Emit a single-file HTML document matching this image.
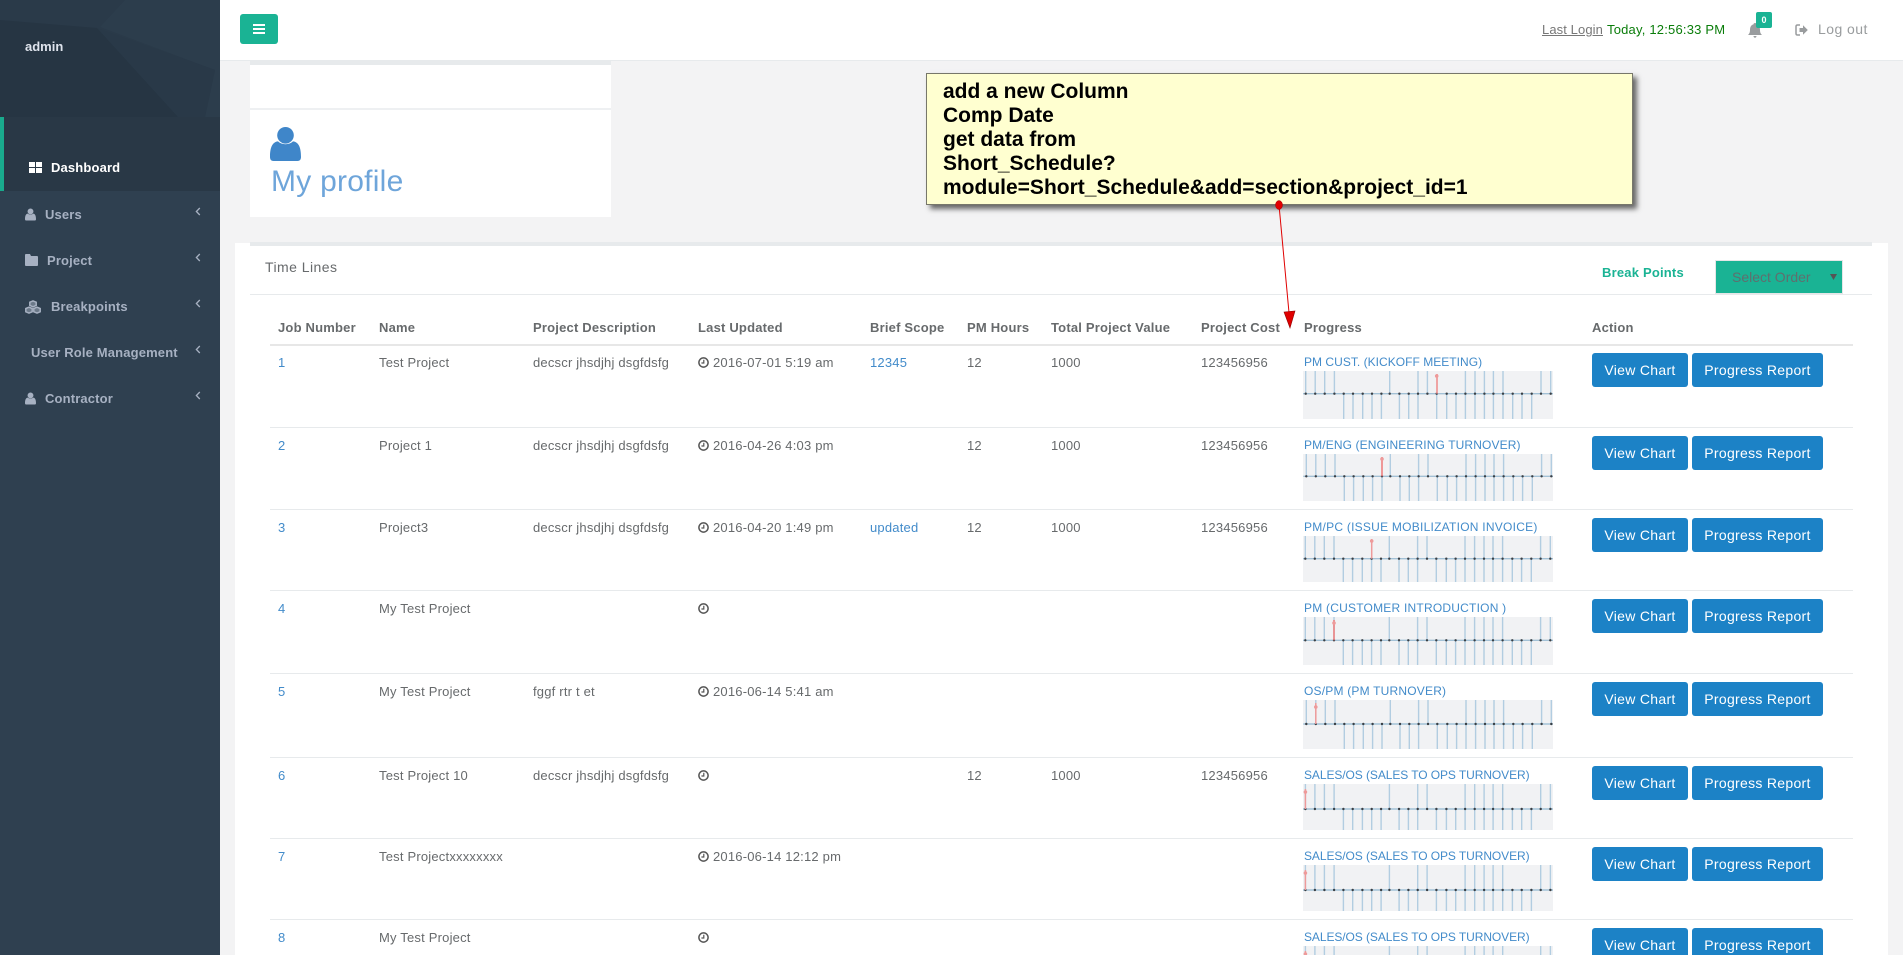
<!DOCTYPE html>
<html lang="en">
<head>
<meta charset="utf-8">
<title>Dashboard</title>
<style>
html,body{margin:0;padding:0;width:1903px;height:955px;overflow:hidden;background:#f3f3f4}
body{font-family:"Liberation Sans",Arial,sans-serif;font-size:13px;color:#676a6c;position:relative}
*{box-sizing:border-box}
a{text-decoration:none;color:inherit}
.abs{position:absolute}
#side{left:0;top:0;width:220px;height:955px;background:#2f4050}
#side .pat{position:absolute;left:0;top:0}
#side .act{position:absolute;left:0;top:117px;width:220px;height:74px;background:#293846;border-left:4px solid #19aa8d}
.nav{position:absolute;font-weight:bold;color:#a7b1c2;line-height:20px;letter-spacing:.15px;white-space:nowrap}
.chev{position:absolute;left:195px;width:6px;height:9px}
#top{left:220px;top:0;width:1683px;height:61px;background:#fff;border-bottom:1px solid #e7eaec}
#tog{left:240px;top:14px;width:38px;height:30px;background:#1ab394;border-radius:3px}
#tog i{position:absolute;left:13px;width:12px;height:2.4px;background:#fff}
.note{left:926px;top:73px;width:707px;height:132px;background:#ffffd0;border:1px solid #77776a;box-shadow:4px 4px 5px #666;color:#000;font-weight:bold;font-size:21px;line-height:24px;padding:6px 0 0 16px;white-space:nowrap;z-index:5}
#wrap{position:absolute;left:270px;top:303px;width:1583px;height:652px;overflow:hidden}
#tbl{width:1583px;border-collapse:separate;border-spacing:0;table-layout:fixed;font-size:13px;letter-spacing:.2px}
#tbl th{height:43px;padding:15px 0 6px 8px;line-height:20px;text-align:left;font-weight:bold;border-bottom:2px solid #e7e7e7;vertical-align:top;white-space:nowrap}
#tbl td{padding:8px 0 0 8px;line-height:20px;vertical-align:top;border-bottom:1px solid #e7eaec;white-space:nowrap}
#tbl tr.f td{padding-top:7px}
#tbl tr.l td{border-bottom:0}
#tbl td a{color:#428bca}
#tbl td a.t{display:block;height:18px;line-height:18px;font-size:12px;letter-spacing:0;color:#428bca}
#tbl svg.ch{display:block;margin-left:-1px;background:#f1f2f4}
#tbl td .btns{display:flex;gap:4px;letter-spacing:.3px}
#tbl td a.btn{display:block;height:34px;line-height:34px;background:#1c82c6;color:#fff;text-align:center;border-radius:3px;font-size:14px}
#tbl tr.l td a.btn{height:27px;overflow:hidden;border-radius:3px 3px 0 0}
.b1{width:96px}.b2{width:131px}
.clk{display:inline-block;width:11px;height:11px;vertical-align:-1px;margin-right:4px}
</style>
</head>
<body>
<svg width="0" height="0" style="position:absolute">
<defs>
<g id="c">
<path d="M-3 0H248" stroke="#a3c1d6" stroke-width="1.400" fill="none"/>
<path d="M0-40V0M9.500-40V0M19-40V0M28.700-40V0M84-40V0M112.300-40V0M121.700-40V0M159.700-40V0M169.300-40V0M178.700-40V0M187.700-40V0M197.300-40V0M235.300-40V0M245-40V0M38 0V40M47.300 0V40M57 0V40M66.300 0V40M75.700 0V40M93.700 0V40M103 0V40M112.300 0V40M131 0V40M141 0V40M150.300 0V40M159.700 0V40M169.300 0V40M178.700 0V40M187.700 0V40M197.300 0V40M207 0V40M216.300 0V40M226 0V40" stroke="#b2cde1" stroke-width="1.400" fill="none"/>
<path d="M0 0h.01M9.500 0h.01M19 0h.01M28.700 0h.01M38 0h.01M47.300 0h.01M57 0h.01M66.300 0h.01M75.700 0h.01M84 0h.01M93.700 0h.01M103 0h.01M112.300 0h.01M121.700 0h.01M131 0h.01M141 0h.01M150.300 0h.01M159.700 0h.01M169.300 0h.01M178.700 0h.01M187.700 0h.01M197.300 0h.01M207 0h.01M216.300 0h.01M226 0h.01M235.300 0h.01M245 0h.01" stroke="#3a3f44" stroke-width="2.400" stroke-linecap="round" fill="none"/>
</g>
<symbol id="user" viewBox="0 0 31 34">
<path d="M3.500 34C1.200 34 0 32.500 0 30c0-8 1.700-15 8-15.600 2 1.800 4.500 2.800 7.500 2.800s5.500-1 7.500-2.800c6.300.6 8 7.600 8 15.600 0 2.500-1.200 4-3.500 4z" fill="currentColor"/>
<circle cx="15.500" cy="8.300" r="8.300" fill="currentColor"/>
</symbol>
<symbol id="clock" viewBox="0 0 11 11">
<circle cx="5.500" cy="5.500" r="4.600" fill="none" stroke="#555" stroke-width="1.500"/>
<path d="M5.800 2.800V6H3.400" fill="none" stroke="#555" stroke-width="1.200"/>
</symbol>
<symbol id="chev" viewBox="0 0 6 9">
<path d="M4.800 1L1.400 4.500 4.800 8" fill="none" stroke="#a7b1c2" stroke-width="1.300"/>
</symbol>
</defs>
</svg>

<div id="side" class="abs">
<svg class="pat" width="220" height="117" viewBox="0 0 220 117">
<rect width="220" height="117" fill="#2a3a49"/>
<path d="M0 20L97 28 178 117H0z" fill="#263543"/>
<path d="M100 27L125 0H220V117H205L215 70 100 27z" fill="#2c3d4c"/>
<path d="M178 117L97 28 215 70 205 117z" fill="#293948"/>
</svg>
<div class="act"></div>
<div class="abs" style="left:25px;top:37px;line-height:20px;font-weight:bold;color:#dfe4ed;font-size:13px">admin</div>

<svg class="abs" style="left:29px;top:162px" width="13" height="11" viewBox="0 0 13 11"><path d="M0 0h6v5H0zM7 0h6v5H7zM0 6h6v5H0zM7 6h6v5H7z" fill="#fff"/></svg>
<a class="nav" style="left:51px;top:158px;color:#fff">Dashboard</a>

<svg class="abs" style="left:25px;top:208px;color:#a7b1c2" width="11" height="13"><use href="#user"/></svg>
<a class="nav" style="left:45px;top:205px">Users</a>
<svg class="chev" style="top:207px"><use href="#chev"/></svg>

<svg class="abs" style="left:25px;top:254px" width="13" height="12" viewBox="0 0 13 12"><path d="M1 0h4l1 2h6c.6 0 1 .4 1 1v8c0 .6-.4 1-1 1H1c-.6 0-1-.4-1-1V1c0-.6.4-1 1-1z" fill="#a7b1c2"/></svg>
<a class="nav" style="left:47px;top:251px">Project</a>
<svg class="chev" style="top:253px"><use href="#chev"/></svg>

<svg class="abs" style="left:25px;top:300px" width="16" height="14" viewBox="0 0 16 14"><g fill="none" stroke="#a7b1c2" stroke-width="1.500"><path d="M8 .9l3.200 1.300v3.200L8 6.800 4.800 5.400V2.200z" fill="#a7b1c2" fill-opacity=".5"/><path d="M4 7.200l3.200 1.300v3.300L4 13.100.8 11.800V8.500z" fill="#a7b1c2" fill-opacity=".5"/><path d="M12 7.200l3.200 1.300v3.300L12 13.100 8.800 11.800V8.500z" fill="#a7b1c2" fill-opacity=".5"/></g></svg>
<a class="nav" style="left:51px;top:297px">Breakpoints</a>
<svg class="chev" style="top:299px"><use href="#chev"/></svg>

<a class="nav" style="left:31px;top:343px">User Role Management</a>
<svg class="chev" style="top:345px"><use href="#chev"/></svg>

<svg class="abs" style="left:25px;top:392px;color:#a7b1c2" width="11" height="13"><use href="#user"/></svg>
<a class="nav" style="left:45px;top:389px">Contractor</a>
<svg class="chev" style="top:391px"><use href="#chev"/></svg>
</div>

<div id="top" class="abs"></div>
<div id="tog" class="abs"><i style="top:10px"></i><i style="top:14px"></i><i style="top:18px"></i></div>

<div class="abs" style="left:1542px;top:20px;line-height:20px;white-space:nowrap;letter-spacing:.1px"><a style="text-decoration:underline;color:#777">Last Login</a></div>
<div class="abs" style="left:1607px;top:20px;line-height:20px;white-space:nowrap;color:#0a7d0a;letter-spacing:.2px">Today, 12:56:33 PM</div>
<svg class="abs" style="left:1748px;top:23px" width="14" height="15" viewBox="0 0 14 15"><path d="M7 0c1 0 1.500.7 1.500 1.400C11 2 12 4.200 12 7c0 2.500.7 3.800 2 5H0c1.300-1.200 2-2.500 2-5 0-2.800 1-5 3.500-5.600C5.500.7 6 0 7 0zM5.500 13h3c0 1-.7 1.800-1.500 1.800S5.500 14 5.500 13z" fill="#999c9e"/></svg>
<div class="abs" style="left:1756px;top:12px;width:16px;height:16px;background:#1ab394;border-radius:2px;color:#fff;font-weight:bold;font-size:9px;line-height:16px;text-align:center">0</div>
<svg class="abs" style="left:1795px;top:24px" width="13" height="12" viewBox="0 0 13 12"><path d="M5 1H2.500C1.500 1 1 1.500 1 2.500v7c0 1 .5 1.500 1.500 1.500H5" fill="none" stroke="#999c9e" stroke-width="1.500"/><path d="M4.500 4H8V1.200L12.800 6 8 10.800V8H4.500z" fill="#999c9e"/></svg>
<div class="abs" style="left:1818px;top:19px;line-height:20px;font-size:14px;letter-spacing:.45px;color:#999c9e">Log out</div>

<div class="abs" style="left:250px;top:61px;width:361px;height:156px;background:#fff;border-top:4px solid #e7eaec">
<div class="abs" style="left:0;top:43px;width:361px;height:2px;background:#eef0f2"></div>
<svg class="abs" style="left:20px;top:62px;color:#3f86c9" width="31" height="34"><use href="#user"/></svg>
<div class="abs" style="left:21px;top:98px;font-size:30px;line-height:38px;color:#6ea5da;white-space:nowrap;letter-spacing:.25px">My profile</div>
</div>

<div class="abs" style="left:235px;top:243px;width:1653px;height:712px;background:#fff"></div>
<div class="abs" style="left:250px;top:242px;width:1622px;height:4px;background:#e7eaec"></div>
<div class="abs" style="left:265px;top:257px;font-size:14px;line-height:20px;letter-spacing:.45px">Time Lines</div>
<div class="abs" style="left:250px;top:294px;width:1622px;height:1px;background:#e7eaec"></div>
<div class="abs" style="left:1602px;top:263px;font-weight:bold;line-height:20px;letter-spacing:.2px;color:#1ab394">Break Points</div>
<div class="abs" style="left:1715px;top:260px;width:128px;height:34px;background:#1ab394;border:1px solid #e5e6e7;color:#5f6f6e;font-size:14px;line-height:33px;padding-left:16px">Select Order
<svg class="abs" style="left:114px;top:13px" width="7" height="6"><path d="M0 0h7L3.500 6z" fill="#555"/></svg></div>

<div id="wrap">
<table id="tbl">
<colgroup><col style="width:101px"><col style="width:154px"><col style="width:165px"><col style="width:172px"><col style="width:97px"><col style="width:84px"><col style="width:150px"><col style="width:103px"><col style="width:288px"><col style="width:269px"></colgroup>
<thead><tr><th>Job Number</th><th>Name</th><th>Project Description</th><th>Last Updated</th><th>Brief Scope</th><th>PM Hours</th><th>Total Project Value</th><th>Project Cost</th><th>Progress</th><th>Action</th></tr></thead>
<tbody>
<tr class="f" style="height:82px"><td><a>1</a></td><td>Test Project</td><td>decscr jhsdjhj dsgfdsfg</td><td><svg class="clk"><use href="#clock"/></svg>2016-07-01 5:19 am</td><td><a>12345</a></td><td>12</td><td>1000</td><td>123456956</td>
<td><a class="t" style="letter-spacing:.03px">PM CUST. (KICKOFF MEETING)</a><svg class="ch" width="250" height="48"><use href="#c" x="2.700" y="22.700"/><path d="M134 3V22.700" stroke="#ee8a8a" stroke-width="1.500"/><circle cx="133.700" cy="5" r="1.800" fill="#ee9a9a"/></svg></td>
<td><div class="btns"><a class="btn b1">View Chart</a><a class="btn b2">Progress Report</a></div></td></tr>
<tr style="height:82px"><td><a>2</a></td><td>Project 1</td><td>decscr jhsdjhj dsgfdsfg</td><td><svg class="clk"><use href="#clock"/></svg>2016-04-26 4:03 pm</td><td></td><td>12</td><td>1000</td><td>123456956</td>
<td><a class="t" style="letter-spacing:.12px">PM/ENG (ENGINEERING TURNOVER)</a><svg class="ch" width="250" height="47"><use href="#c" x="3.300" y="22.300"/><path d="M79 3V22.300" stroke="#ee7a7a" stroke-width="1.500"/><circle cx="79" cy="5" r="1.800" fill="#ee9a9a"/></svg></td>
<td><div class="btns"><a class="btn b1">View Chart</a><a class="btn b2">Progress Report</a></div></td></tr>
<tr style="height:81px"><td><a>3</a></td><td>Project3</td><td>decscr jhsdjhj dsgfdsfg</td><td><svg class="clk"><use href="#clock"/></svg>2016-04-20 1:49 pm</td><td><a>updated</a></td><td>12</td><td>1000</td><td>123456956</td>
<td><a class="t" style="letter-spacing:.25px">PM/PC (ISSUE MOBILIZATION INVOICE)</a><svg class="ch" width="250" height="46"><use href="#c" x="2.300" y="22.700"/><path d="M68.700 3V22.700" stroke="#ee9a9a" stroke-width="1.500"/><circle cx="68.700" cy="5" r="1.800" fill="#ee9a9a"/></svg></td>
<td><div class="btns"><a class="btn b1">View Chart</a><a class="btn b2">Progress Report</a></div></td></tr>
<tr style="height:83px"><td><a>4</a></td><td>My Test Project</td><td></td><td><svg class="clk"><use href="#clock"/></svg></td><td></td><td></td><td></td><td></td>
<td><a class="t" style="letter-spacing:.22px">PM (CUSTOMER INTRODUCTION )</a><svg class="ch" width="250" height="48"><use href="#c" x="2.300" y="23.300"/><path d="M31 3V23.300" stroke="#ee7a7a" stroke-width="1.500"/><circle cx="31" cy="6" r="1.800" fill="#ee9a9a"/></svg></td>
<td><div class="btns"><a class="btn b1">View Chart</a><a class="btn b2">Progress Report</a></div></td></tr>
<tr style="height:84px"><td><a>5</a></td><td>My Test Project</td><td>fggf rtr t et</td><td><svg class="clk"><use href="#clock"/></svg>2016-06-14 5:41 am</td><td></td><td></td><td></td><td></td>
<td><a class="t" style="letter-spacing:.2px">OS/PM (PM TURNOVER)</a><svg class="ch" width="250" height="49"><use href="#c" x="3.300" y="24"/><path d="M12.800 3V24" stroke="#ee9a9a" stroke-width="1.500"/><circle cx="12.800" cy="7" r="1.800" fill="#ee9a9a"/></svg></td>
<td><div class="btns"><a class="btn b1">View Chart</a><a class="btn b2">Progress Report</a></div></td></tr>
<tr style="height:81px"><td><a>6</a></td><td>Test Project 10</td><td>decscr jhsdjhj dsgfdsfg</td><td><svg class="clk"><use href="#clock"/></svg></td><td></td><td>12</td><td>1000</td><td>123456956</td>
<td><a class="t" style="letter-spacing:-.08px">SALES/OS (SALES TO OPS TURNOVER)</a><svg class="ch" width="250" height="46"><use href="#c" x="2.400" y="25"/><path d="M2.400 5V25" stroke="#ee9a9a" stroke-width="1.500"/><circle cx="2.400" cy="8" r="1.800" fill="#ee9a9a"/></svg></td>
<td><div class="btns"><a class="btn b1">View Chart</a><a class="btn b2">Progress Report</a></div></td></tr>
<tr style="height:81px"><td><a>7</a></td><td>Test Projectxxxxxxxx</td><td></td><td><svg class="clk"><use href="#clock"/></svg>2016-06-14 12:12 pm</td><td></td><td></td><td></td><td></td>
<td><a class="t" style="letter-spacing:-.08px">SALES/OS (SALES TO OPS TURNOVER)</a><svg class="ch" width="250" height="46"><use href="#c" x="2.400" y="25"/><path d="M2.400 5V25" stroke="#ee9a9a" stroke-width="1.500"/><circle cx="2.400" cy="8" r="1.800" fill="#ee9a9a"/></svg></td>
<td><div class="btns"><a class="btn b1">View Chart</a><a class="btn b2">Progress Report</a></div></td></tr>
<tr class="l"><td><a>8</a></td><td>My Test Project</td><td></td><td><svg class="clk"><use href="#clock"/></svg></td><td></td><td></td><td></td><td></td>
<td><a class="t" style="letter-spacing:-.08px">SALES/OS (SALES TO OPS TURNOVER)</a><svg class="ch" width="250" height="9"><use href="#c" x="2.400" y="25"/><path d="M2.400 5V25" stroke="#ee9a9a" stroke-width="1.500"/><circle cx="2.400" cy="8" r="1.800" fill="#ee9a9a"/></svg></td>
<td><div class="btns"><a class="btn b1">View Chart</a><a class="btn b2">Progress Report</a></div></td></tr>
</tbody>
</table>
</div>

<div class="abs note">add a new Column<br>Comp Date<br>get data from<br>Short_Schedule?<br>module=Short_Schedule&amp;add=section&amp;project_id=1</div>

<svg class="abs" style="left:0;top:0;z-index:6;pointer-events:none" width="1903" height="955">
<path d="M1279 205L1289.500 318" stroke="#e00000" stroke-width="1" fill="none"/>
<ellipse cx="1279" cy="205" rx="3.500" ry="4.500" fill="#e00000" stroke="#a00000" stroke-width=".5"/>
<path d="M1284 312L1295 311 1290 328z" fill="#e00000" stroke="#900000" stroke-width=".6"/>
</svg>
</body>
</html>
